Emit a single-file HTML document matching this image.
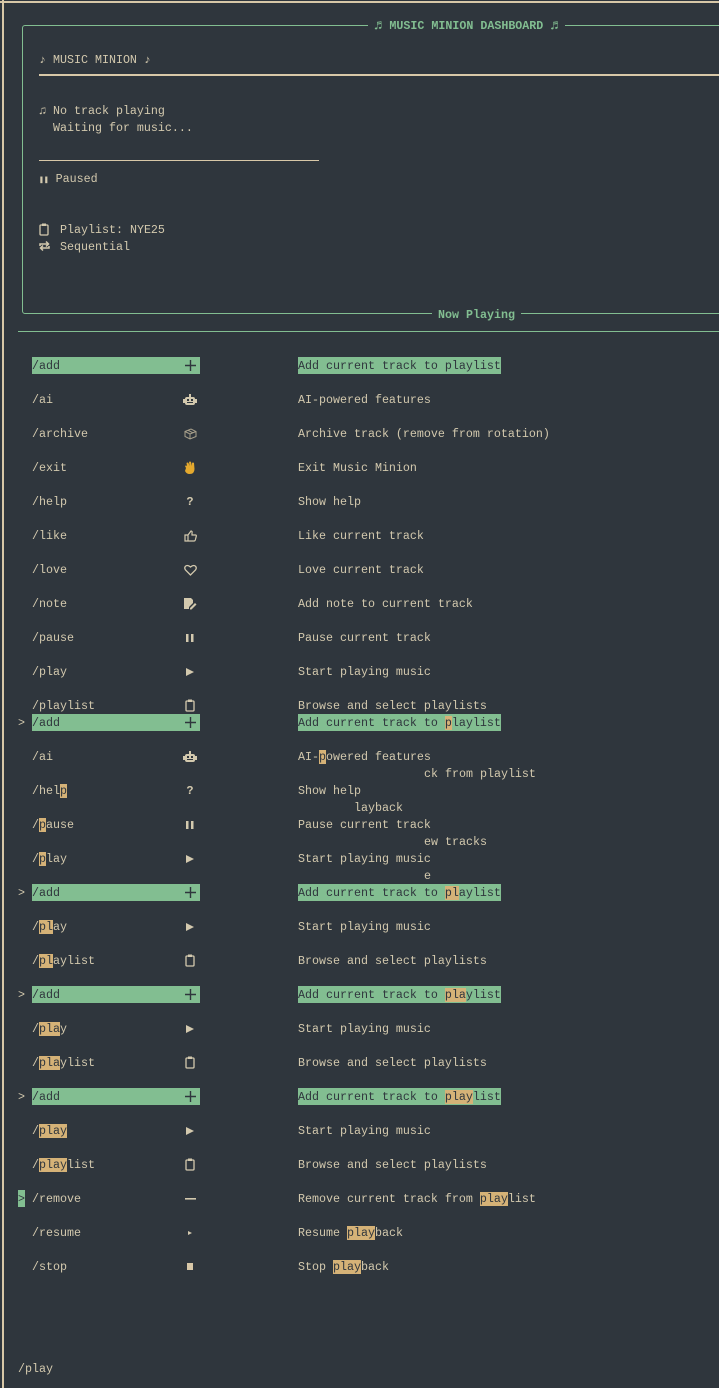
<!DOCTYPE html>
<html><head><meta charset="utf-8"><style>
html,body{margin:0;padding:0}
body{width:719px;height:1388px;background:#2f363d;position:relative;overflow:hidden;font-family:"Liberation Mono","DejaVu Sans Mono",monospace;font-size:11.67px;color:#d3c9ae}
.l{position:absolute;height:17px;line-height:18px;white-space:pre}
.g{background:#82be91;color:#2f363d}
.h{background:#d5b277;color:#2f363d}
.ic{position:absolute;width:14px;height:17px;display:flex;align-items:center;justify-content:center;left:183px;color:#d3c9ae}
.ic svg{display:block}
.hr{position:absolute}
</style></head><body>
<div class="hr" style="left:0;top:1px;width:719px;height:2px;background:#d8c8a8"></div>
<div class="hr" style="left:2px;top:0;width:2px;height:1388px;background:#d8c8a8"></div>
<div class="hr" style="left:22px;top:25px;width:720px;height:289px;border:1px solid #82be91;border-radius:3px;box-sizing:border-box"></div>
<div class="l" style="top:17px;left:368px;background:#2f363d;color:#82be91;font-weight:bold;padding:0 6px"><span style="font-size:14px">♬</span> MUSIC MINION DASHBOARD <span style="font-size:14px">♬</span></div>
<div class="l" style="top:51px;left:39px">♪ MUSIC MINION ♪</div>
<div class="hr" style="left:39px;top:74px;width:680px;height:2px;background:#d8c8a8"></div>
<div class="l" style="top:102px;left:39px">♫ No track playing</div>
<div class="l" style="top:119px;left:39px">  Waiting for music...</div>
<div class="hr" style="left:39px;top:160px;width:280px;height:1px;background:#d8c8a8"></div>
<div class="l" style="top:170px;left:39px"><span style="font-size:8px">❚❚</span> Paused</div>
<svg class="hr" style="left:39px;top:223px" width="10" height="13" viewBox="0 0 10 13"><rect x="1" y="2" width="8" height="10" rx="1" fill="none" stroke="#d3c9ae" stroke-width="1.3"/><rect x="3" y="0.5" width="4" height="2.5" fill="#d3c9ae"/></svg>
<div class="l" style="top:221px;left:60px">Playlist: NYE25</div>
<svg class="hr" style="left:38px;top:240px" width="13" height="12" viewBox="0 0 13 12"><path d="M2 6V4h8M8 1.5l2.5 2.5L8 6.5M11 6v2H3M5 10.5L2.5 8 5 5.5" fill="none" stroke="#d3c9ae" stroke-width="1.5"/></svg>
<div class="l" style="top:238px;left:60px">Sequential</div>
<div class="l" style="top:306px;left:432px;background:#2f363d;color:#82be91;font-weight:bold;padding:0 6px">Now Playing</div>
<div class="hr" style="left:18px;top:331px;width:701px;height:1px;background:#82be91"></div>

<!-- group 1 -->
<div class="l g" style="top:357px;left:32px;width:168px">/add</div><div class="ic" style="top:357px"><svg width="11" height="11"><path d="M5.5 0v11M0 5.5h11" stroke="#2f363d" stroke-width="1.4"/></svg></div>
<div class="l g" style="top:357px;left:298px">Add current track to playlist</div>
<div class="l" style="top:391px;left:32px">/ai</div><div class="ic" style="top:391px"><svg width="14" height="12"><rect x="2" y="3" width="10" height="8" rx="2" fill="#d3c9ae"/><rect x="6" y="0" width="2" height="3" fill="#d3c9ae"/><rect x="0" y="5" width="2" height="4" fill="#d3c9ae"/><rect x="12" y="5" width="2" height="4" fill="#d3c9ae"/><rect x="4" y="5" width="2" height="2" fill="#2f363d"/><rect x="8" y="5" width="2" height="2" fill="#2f363d"/><rect x="4" y="8" width="6" height="1" fill="#2f363d"/></svg></div><div class="l" style="top:391px;left:298px">AI-powered features</div>
<div class="l" style="top:425px;left:32px">/archive</div><div class="ic" style="top:425px"><svg width="13" height="12"><path d="M1 3.5L7 1l5 2.5v5L6 11 1 8.5zM1 3.5L6 6l6-2.5M6 6v5M4 2.3l5 2.5" fill="none" stroke="#a9a18c" stroke-width="1"/></svg></div><div class="l" style="top:425px;left:298px">Archive track (remove from rotation)</div>
<div class="l" style="top:459px;left:32px">/exit</div><div class="ic" style="top:459px"><svg width="14" height="14"><path d="M3 7L2 5q1-1 2 0l-0.5-3q1-1 2 0l1 3-0.5-4q1-1 2 0l1 4 0-3q1-1 2 0l0.5 6q0 5-5 5-3 0-4.5-3z" fill="#e4a92e"/></svg></div><div class="l" style="top:459px;left:298px">Exit Music Minion</div>
<div class="l" style="top:493px;left:32px">/help</div><div class="ic" style="top:493px;font-weight:bold">?</div><div class="l" style="top:493px;left:298px">Show help</div>
<div class="l" style="top:527px;left:32px">/like</div><div class="ic" style="top:527px"><svg width="13" height="12"><path d="M1 5h3v6H1zM4 5l3-4q1.5 0 1 2L8 5h3.5q1 0 .8 1.2L11.3 10q-.3 1-1.3 1H4" fill="none" stroke="#d3c9ae" stroke-width="1.2"/></svg></div><div class="l" style="top:527px;left:298px">Like current track</div>
<div class="l" style="top:561px;left:32px">/love</div><div class="ic" style="top:561px"><svg width="13" height="12"><path d="M6.5 11L1.5 6Q0 4 1.5 2.2 3.5 0.5 6.5 3 9.5 0.5 11.5 2.2 13 4 11.5 6z" fill="none" stroke="#d3c9ae" stroke-width="1.3"/></svg></div><div class="l" style="top:561px;left:298px">Love current track</div>
<div class="l" style="top:595px;left:32px">/note</div><div class="ic" style="top:595px"><svg width="14" height="13"><path d="M1 1h7l2 2v3l-4 4v2H1z" fill="#d3c9ae"/><path d="M7 11l5-5 1.5 1.5-5 5H7z" fill="#d3c9ae"/></svg></div><div class="l" style="top:595px;left:298px">Add note to current track</div>
<div class="l" style="top:629px;left:32px">/pause</div><div class="ic" style="top:629px"><svg width="8" height="8"><rect x="0" y="0" width="2.5" height="8" fill="#d3c9ae"/><rect x="5" y="0" width="2.5" height="8" fill="#d3c9ae"/></svg></div><div class="l" style="top:629px;left:298px">Pause current track</div>
<div class="l" style="top:663px;left:32px">/play</div><div class="ic" style="top:663px"><svg width="8" height="8"><path d="M0 0l8 4-8 4z" fill="#d3c9ae"/></svg></div><div class="l" style="top:663px;left:298px">Start playing music</div>
<div class="l" style="top:697px;left:32px">/playlist</div><div class="ic" style="top:697px"><svg width="10" height="13"><rect x="1" y="2" width="8" height="10" rx="1" fill="none" stroke="#d3c9ae" stroke-width="1.3"/><rect x="3" y="0.5" width="4" height="2.5" fill="#d3c9ae"/></svg></div><div class="l" style="top:697px;left:298px">Browse and select playlists</div>

<!-- group 2 -->
<div class="l" style="top:714px;left:18px">&gt;</div>
<div class="l g" style="top:714px;left:32px;width:168px">/add</div><div class="ic" style="top:714px"><svg width="11" height="11"><path d="M5.5 0v11M0 5.5h11" stroke="#2f363d" stroke-width="1.4"/></svg></div>
<div class="l g" style="top:714px;left:298px">Add current track to <span class="h">p</span>laylist</div>
<div class="l" style="top:748px;left:32px">/ai</div><div class="ic" style="top:748px"><svg width="14" height="12"><rect x="2" y="3" width="10" height="8" rx="2" fill="#d3c9ae"/><rect x="6" y="0" width="2" height="3" fill="#d3c9ae"/><rect x="0" y="5" width="2" height="4" fill="#d3c9ae"/><rect x="12" y="5" width="2" height="4" fill="#d3c9ae"/><rect x="4" y="5" width="2" height="2" fill="#2f363d"/><rect x="8" y="5" width="2" height="2" fill="#2f363d"/><rect x="4" y="8" width="6" height="1" fill="#2f363d"/></svg></div><div class="l" style="top:748px;left:298px">AI-<span class="h">p</span>owered features</div>
<div class="l" style="top:765px;left:424px">ck from playlist</div>
<div class="l" style="top:782px;left:32px">/hel<span class="h">p</span></div><div class="ic" style="top:782px;font-weight:bold">?</div><div class="l" style="top:782px;left:298px">Show help</div>
<div class="l" style="top:799px;left:354px">layback</div>
<div class="l" style="top:816px;left:32px">/<span class="h">p</span>ause</div><div class="ic" style="top:816px"><svg width="8" height="8"><rect x="0" y="0" width="2.5" height="8" fill="#d3c9ae"/><rect x="5" y="0" width="2.5" height="8" fill="#d3c9ae"/></svg></div><div class="l" style="top:816px;left:298px">Pause current track</div>
<div class="l" style="top:833px;left:424px">ew tracks</div>
<div class="l" style="top:850px;left:32px">/<span class="h">p</span>lay</div><div class="ic" style="top:850px"><svg width="8" height="8"><path d="M0 0l8 4-8 4z" fill="#d3c9ae"/></svg></div><div class="l" style="top:850px;left:298px">Start playing music</div>
<div class="l" style="top:867px;left:424px">e</div>

<div class="l" style="top:884px;left:18px">&gt;</div>
<div class="l g" style="top:884px;left:32px;width:168px">/add</div><div class="ic" style="top:884px"><svg width="11" height="11"><path d="M5.5 0v11M0 5.5h11" stroke="#2f363d" stroke-width="1.4"/></svg></div>
<div class="l g" style="top:884px;left:298px">Add current track to <span class="h">pl</span>aylist</div>
<div class="l" style="top:918px;left:32px">/<span class="h">pl</span>ay</div><div class="ic" style="top:918px"><svg width="8" height="8"><path d="M0 0l8 4-8 4z" fill="#d3c9ae"/></svg></div><div class="l" style="top:918px;left:298px">Start playing music</div>
<div class="l" style="top:952px;left:32px">/<span class="h">pl</span>aylist</div><div class="ic" style="top:952px"><svg width="10" height="13"><rect x="1" y="2" width="8" height="10" rx="1" fill="none" stroke="#d3c9ae" stroke-width="1.3"/><rect x="3" y="0.5" width="4" height="2.5" fill="#d3c9ae"/></svg></div><div class="l" style="top:952px;left:298px">Browse and select playlists</div>

<div class="l" style="top:986px;left:18px">&gt;</div>
<div class="l g" style="top:986px;left:32px;width:168px">/add</div><div class="ic" style="top:986px"><svg width="11" height="11"><path d="M5.5 0v11M0 5.5h11" stroke="#2f363d" stroke-width="1.4"/></svg></div>
<div class="l g" style="top:986px;left:298px">Add current track to <span class="h">pla</span>ylist</div>
<div class="l" style="top:1020px;left:32px">/<span class="h">pla</span>y</div><div class="ic" style="top:1020px"><svg width="8" height="8"><path d="M0 0l8 4-8 4z" fill="#d3c9ae"/></svg></div><div class="l" style="top:1020px;left:298px">Start playing music</div>
<div class="l" style="top:1054px;left:32px">/<span class="h">pla</span>ylist</div><div class="ic" style="top:1054px"><svg width="10" height="13"><rect x="1" y="2" width="8" height="10" rx="1" fill="none" stroke="#d3c9ae" stroke-width="1.3"/><rect x="3" y="0.5" width="4" height="2.5" fill="#d3c9ae"/></svg></div><div class="l" style="top:1054px;left:298px">Browse and select playlists</div>

<div class="l" style="top:1088px;left:18px">&gt;</div>
<div class="l g" style="top:1088px;left:32px;width:168px">/add</div><div class="ic" style="top:1088px"><svg width="11" height="11"><path d="M5.5 0v11M0 5.5h11" stroke="#2f363d" stroke-width="1.4"/></svg></div>
<div class="l g" style="top:1088px;left:298px">Add current track to <span class="h">play</span>list</div>
<div class="l" style="top:1122px;left:32px">/<span class="h">play</span></div><div class="ic" style="top:1122px"><svg width="8" height="8"><path d="M0 0l8 4-8 4z" fill="#d3c9ae"/></svg></div><div class="l" style="top:1122px;left:298px">Start playing music</div>
<div class="l" style="top:1156px;left:32px">/<span class="h">play</span>list</div><div class="ic" style="top:1156px"><svg width="10" height="13"><rect x="1" y="2" width="8" height="10" rx="1" fill="none" stroke="#d3c9ae" stroke-width="1.3"/><rect x="3" y="0.5" width="4" height="2.5" fill="#d3c9ae"/></svg></div><div class="l" style="top:1156px;left:298px">Browse and select playlists</div>

<div class="l g" style="top:1190px;left:18px;width:7px">&gt;</div>
<div class="l" style="top:1190px;left:32px">/remove</div><div class="ic" style="top:1190px"><svg width="11" height="2"><rect width="11" height="1.6" fill="#d3c9ae"/></svg></div><div class="l" style="top:1190px;left:298px">Remove current track from <span class="h">play</span>list</div>
<div class="l" style="top:1224px;left:32px">/resume</div><div class="ic" style="top:1224px"><svg width="4" height="4"><path d="M0 0l4 2-4 2z" fill="#d3c9ae"/></svg></div><div class="l" style="top:1224px;left:298px">Resume <span class="h">play</span>back</div>
<div class="l" style="top:1258px;left:32px">/stop</div><div class="ic" style="top:1258px"><svg width="6" height="7"><rect width="6" height="7" fill="#d8c8a8"/></svg></div><div class="l" style="top:1258px;left:298px">Stop <span class="h">play</span>back</div>

<div class="l" style="top:1360px;left:18px">/play</div>
</body></html>
